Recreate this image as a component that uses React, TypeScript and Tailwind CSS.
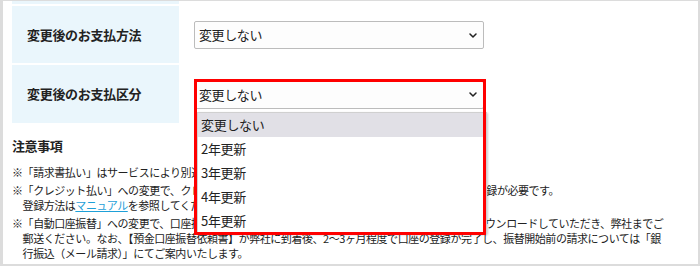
import React from 'react';

const OPTIONS = ['変更しない', '2年更新', '3年更新', '4年更新', '5年更新'];

function Chevron() {
  return (
    <svg width="8" height="5" viewBox="0 0 8 5" fill="none" className="shrink-0">
      <path d="M1 1 L4 4 L7 1" stroke="#222" strokeWidth="1.5" strokeLinecap="round" strokeLinejoin="round" />
    </svg>
  );
}

function SelectBox() {
  return (
    <div className="flex h-[28px] w-[290px] items-center justify-between rounded-[2px] border border-[#bcbcbc] bg-[#fdfdfd] pl-[4px] pr-[6px] text-[13px] tracking-[-0.4px] text-[#222]">
      <span>変更しない</span>
      <Chevron />
    </div>
  );
}

function Row({ label, children, h }: { label: string; children: React.ReactNode; h: string }) {
  return (
    <div className={`flex ${h}`}>
      <div className="flex w-[167px] items-center bg-[#eaf6fc] pl-[15px] text-[13px] font-bold tracking-[-0.3px] text-[#222]">
        {label}
      </div>
      <div className="ml-[15px] flex items-center pt-[1px]">{children}</div>
    </div>
  );
}

export default function App() {
  return (
    <div className="h-[266px] w-[700px] overflow-hidden border-b-2 border-l-[3px] border-r-2 border-t border-[#dcdcdc] bg-white pl-[9px] font-['Noto_Sans_CJK_JP',sans-serif] text-[#222]">
      <div className="flex flex-col gap-[2px]">
        <div className="h-[3px] w-[167px] bg-[#eaf6fc]" />
        <Row label="変更後のお支払方法" h="h-[57px]">
          <SelectBox />
        </Row>
        <Row label="変更後のお支払区分" h="h-[58px]">
          <div className="relative z-10">
            <SelectBox />
            {/* open dropdown */}
            <div className="absolute left-[3px] top-[31px] w-[290px] border border-[#d0d0d0] bg-white shadow-[1px_1px_2px_rgba(0,0,0,0.2)]">
              {OPTIONS.map((o, i) => (
                <div
                  key={o}
                  className={`flex h-[24px] items-center pl-[3px] text-[13px] tracking-[-0.3px] text-[#222] ${i === 0 ? 'bg-[#e1e0e6]' : ''}`}
                >
                  {o}
                </div>
              ))}
            </div>
            {/* red highlight frame */}
            <div className="pointer-events-none absolute left-0 top-[-2px] h-[156px] w-[292px] border-[3px] border-[#ff0000]" />
          </div>
        </Row>
      </div>

      <div className="mt-[14px] text-[13px] font-bold leading-[18px] tracking-[-0.4px]">注意事項</div>

      <div className="mt-[10px] flex flex-col gap-[3px] whitespace-nowrap text-[11px] leading-[15px] tracking-[-0.45px]">
        <div className="flex">
          <span className="w-[10.6px]">※</span>
          <span>「請求書払い」はサービスにより別途手数料がかかります。</span>
        </div>
        <div className="flex">
          <span className="w-[10.6px]">※</span>
          <div>
            <div>「クレジット払い」への変更で、クレジットカード会社のサイトにて本人認証サービスへの事前登録が必要です。</div>
            <div>
              登録方法は<span className="text-[#1ea0d8] underline">マニュアル</span>を参照してください。
            </div>
          </div>
        </div>
        <div className="flex">
          <span className="w-[10.6px]">※</span>
          <div>
            <div>「自動口座振替」への変更で、口座振替依頼書のご提出が必要です。本依頼書はマイページからダウンロードしていただき、弊社までご</div>
            <div>郵送ください。なお、【預金口座振替依頼書】が弊社に到着後、2～3ヶ月程度で口座の登録が完了し、振替開始前の請求については「銀</div>
            <div>行振込（メール請求）」にてご案内いたします。</div>
          </div>
        </div>
      </div>
    </div>
  );
}
